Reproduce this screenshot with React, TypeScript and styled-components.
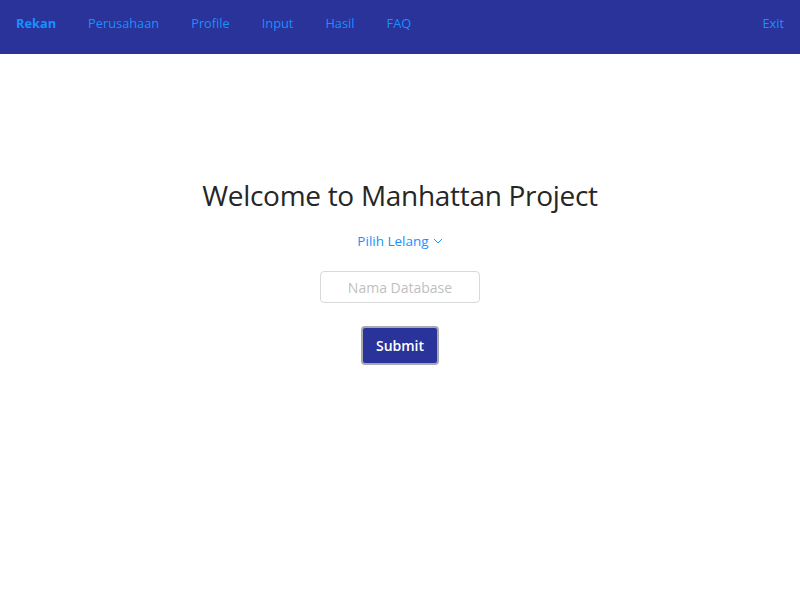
import React, { useState } from "react";
import styled, { createGlobalStyle } from "styled-components";

const GlobalStyle = createGlobalStyle`
  body {
    margin: 0;
    font-family: "Open Sans", "Noto Sans", sans-serif;
    background: #ffffff;
  }
`;

export default function App() {
  const links = ["Rekan", "Perusahaan", "Profile", "Input", "Hasil", "FAQ"];
  const [name, setName] = useState("");

  return (
    <>
      <GlobalStyle />
      <NavBar>
        <NavLinks>
          {links.map((link, index) => (
            <NavLink key={link} $brand={index === 0}>
              {link}
            </NavLink>
          ))}
        </NavLinks>
        <NavLink>Exit</NavLink>
      </NavBar>
      <Main>
        <Title>Welcome to Manhattan Project</Title>
        <Dropdown>
          <span>Pilih Lelang</span>
          <svg width="10" height="10" viewBox="0 0 10 10">
            <path d="M1 3 L5 7 L9 3" fill="none" stroke="currentColor" strokeWidth="1" />
          </svg>
        </Dropdown>
        <Input
          placeholder="Nama Database"
          value={name}
          onChange={(e) => setName(e.target.value)}
        />
        <SubmitButton>Submit</SubmitButton>
      </Main>
    </>
  );
}

const NavBar = styled.div`
  height: 54px;
  background-color: #2a3399;
  display: flex;
  align-items: center;
  justify-content: space-between;
  padding: 0 16px;
  box-sizing: border-box;
`;

const NavLinks = styled.div`
  display: flex;
  gap: 32px;
`;

const NavLink = styled.a<{ $brand?: boolean }>`
  color: #1890ff;
  font-size: 12.8px;
  font-weight: ${(p) => (p.$brand ? 700 : 400)};
  cursor: pointer;
  margin-top: -9px;
`;

const Main = styled.div`
  display: flex;
  flex-direction: column;
  align-items: center;
  padding-top: 122px;
`;

const Title = styled.h1`
  margin: 0;
  font-size: 28px;
  font-weight: 400;
  color: #262626;
  letter-spacing: -0.3px;
`;

const Dropdown = styled.div`
  display: flex;
  align-items: center;
  gap: 4px;
  margin-top: 18px;
  color: #1890ff;
  font-size: 13.5px;
  cursor: pointer;
`;

const Input = styled.input`
  margin-top: 21px;
  width: 160px;
  height: 32px;
  box-sizing: border-box;
  border: 1px solid #d9d9d9;
  border-radius: 4px;
  text-align: center;
  font-family: inherit;
  font-size: 14px;
  color: #262626;
  outline: none;

  &::placeholder {
    color: #bfbfbf;
  }
`;

const SubmitButton = styled.button`
  margin-top: 23px;
  width: 78px;
  height: 39px;
  background-color: #2a3399;
  color: #ffffff;
  border: 2px solid #a8a8b0;
  border-radius: 4px;
  font-family: inherit;
  font-size: 14px;
  font-weight: 600;
  cursor: pointer;
`;
